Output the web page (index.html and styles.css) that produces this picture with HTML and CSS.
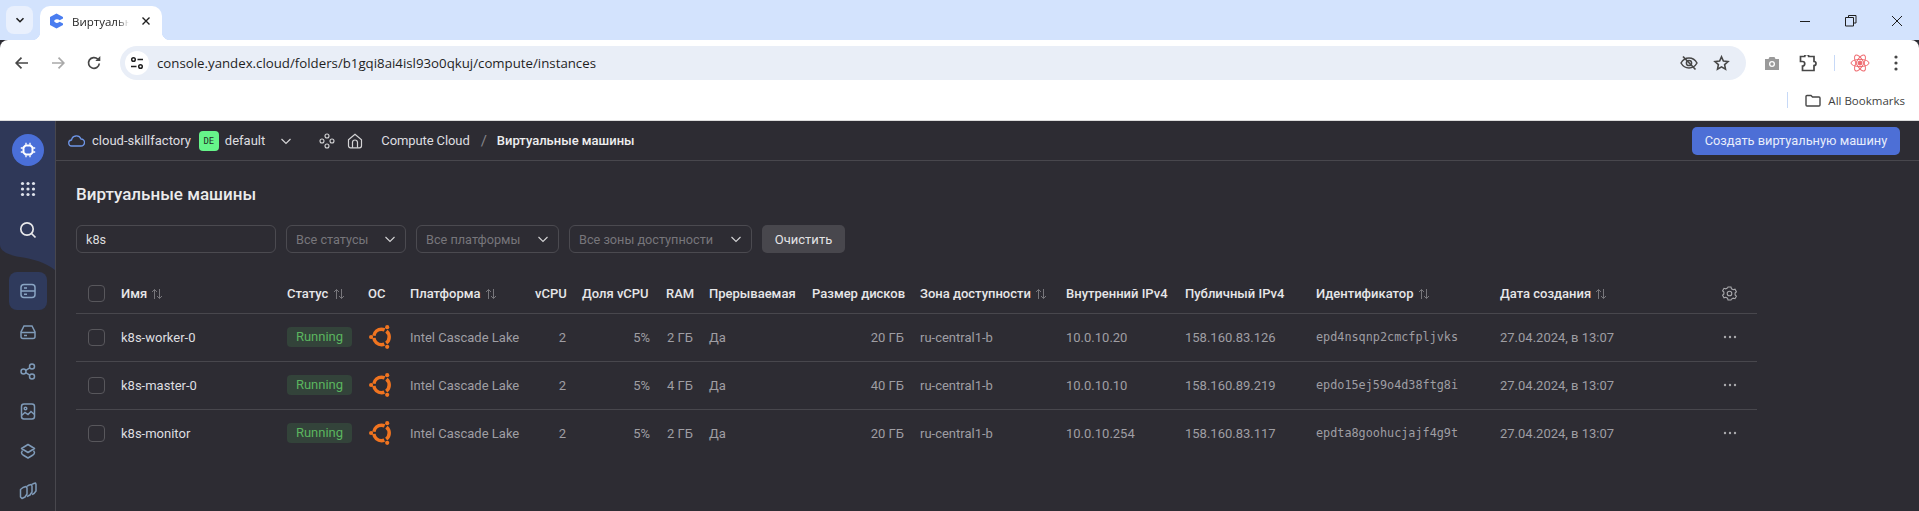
FILE: index.html
```html
<!DOCTYPE html>
<html>
<head>
<meta charset="utf-8">
<title>Виртуальные машины</title>
<link rel="stylesheet" href="styles.css">
</head>
<body>
<div class="tabstrip">
	<div class="tab-search"><svg width="12" height="12" viewBox="0 0 12 12"><path d="M2.5 4.2 6 7.7l3.5-3.5" fill="none" stroke="#1f1f1f" stroke-width="1.6"/></svg></div>
	<div class="tab">
		<svg class="favicon" width="15" height="16" viewBox="0 0 15 16"><path d="M7.5.5 14 4v1.5L10.6 7.3A3.4 3.4 0 0 0 5 8a3.4 3.4 0 0 0 5.6.8L14 10.5V12l-6.5 3.5L1 12V4z" fill="#4a7df0"/></svg>
		<span class="tab-title">Виртуальн</span>
		<svg class="tab-close" width="10" height="10" viewBox="0 0 10 10"><path d="M1.5 1.5l7 7m0-7l-7 7" stroke="#1f1f1f" stroke-width="1.4"/></svg>
	</div>
	<div class="win-btns">
		<svg width="46" height="14" viewBox="0 0 46 14"><path d="M18 7.5h10" stroke="#1f1f1f"/></svg>
		<svg width="46" height="14" viewBox="0 0 46 14"><path d="M20.5 3.5V1.5H28V9h-2.5M17.5 3.5h8V12h-8z" fill="none" stroke="#1f1f1f"/></svg>
		<svg width="46" height="14" viewBox="0 0 46 14"><path d="M18 2l10 10m0-10L18 12" stroke="#1f1f1f"/></svg>
	</div>
</div>
<div class="toolbar">
	<div class="tool-btn"><svg width="16" height="16" viewBox="0 0 16 16"><path d="M14 8H2.5M7.5 2.700 2.200 8l5.300 5.300" fill="none" stroke="#474747" stroke-width="1.7"/></svg></div>
	<div class="tool-btn"><svg width="16" height="16" viewBox="0 0 16 16"><path d="M2 8h11.500M8.500 2.700 13.800 8l-5.300 5.300" fill="none" stroke="#a9a9a9" stroke-width="1.7"/></svg></div>
	<div class="tool-btn"><svg width="16" height="16" viewBox="0 0 16 16"><path d="M13.300 8.500A5.400 5.400 0 1 1 11.800 4.200" fill="none" stroke="#474747" stroke-width="1.7"/><path d="M9.300 6h5V1z" fill="#474747"/></svg></div>
	<div class="omnibox">
		<div class="site-info"><svg width="14" height="14" viewBox="0 0 14 14" fill="none" stroke="#1f1f1f" stroke-width="1.5"><circle cx="3.500" cy="3.500" r="1.800"/><path d="M7.500 3.500H13M1 10.500h5.500"/><circle cx="10.500" cy="10.500" r="1.800"/></svg></div>
		<span class="url">console.yandex.cloud/folders/b1gqi8ai4isl93o0qkuj/compute/instances</span>
		<svg class="omni-eye" width="18" height="16" viewBox="0 0 18 16" fill="none" stroke="#474747" stroke-width="1.5"><path d="M1 8c2-3.500 5-5 8-5s6 1.500 8 5c-2 3.500-5 5-8 5S3 11.500 1 8z"/><circle cx="9" cy="8" r="2.600"/><path d="M3 1.500 15.500 14.500" stroke-width="1.7"/></svg>
		<svg class="omni-star" width="17" height="16" viewBox="0 0 17 16"><path d="M8.500 1.800 10.400 6l4.600.5-3.400 3.100.9 4.500-4-2.300-4 2.300.9-4.500L2 6.500 6.600 6z" fill="none" stroke="#474747" stroke-width="1.6"/></svg>
	</div>
	<div class="tool-btn"><svg width="16" height="15" viewBox="0 0 16 15"><path d="M1 3h3.500L5.500 1h5l1 2H15v11H1z" fill="#9a9a9a"/><circle cx="8" cy="8" r="3" fill="#fff"/><circle cx="8" cy="8" r="1.700" fill="#9a9a9a"/></svg></div>
	<div class="tool-btn"><svg width="18" height="17" viewBox="0 0 18 17"><path d="M1.500 1.500h4.200a2 2 0 0 1 4 0h5.300v5a2 2 0 0 1 0 4v5H3.500v-4.500a2.200 2.200 0 0 0 0-4.500h-2z" fill="none" stroke="#474747" stroke-width="1.7"/></svg></div>
	<div class="tool-sep"></div>
	<div class="tool-btn react"><svg width="20" height="20" viewBox="0 0 20 20" fill="none" stroke="#ef6a6f" stroke-width="1"><ellipse cx="10" cy="10" rx="9" ry="3.600"/><ellipse cx="10" cy="10" rx="9" ry="3.600" transform="rotate(60 10 10)"/><ellipse cx="10" cy="10" rx="9" ry="3.600" transform="rotate(120 10 10)"/><circle cx="10" cy="10" r="2" fill="#ef6a6f"/></svg></div>
	<div class="tool-btn"><svg width="4" height="16" viewBox="0 0 4 16" fill="#474747"><circle cx="2" cy="2" r="1.600"/><circle cx="2" cy="8" r="1.600"/><circle cx="2" cy="14" r="1.600"/></svg></div>
</div>
<div class="bookmarks">
	<div class="tool-sep"></div>
	<svg class="bm-folder" width="16" height="13" viewBox="0 0 16 13"><path d="M1 2.500a1 1 0 0 1 1-1h4l1.500 1.500H14a1 1 0 0 1 1 1v7a1 1 0 0 1-1 1H2a1 1 0 0 1-1-1z" fill="none" stroke="#474747" stroke-width="1.4"/></svg>
	<span>All Bookmarks</span>
</div>
<div class="app">
	<div class="aside">
		<svg class="aside-bg" width="55" height="149" viewBox="0 0 55 149"><path d="M0 0h55v149c-10-8-22-11-35-13C8 134 0 130 0 124z" fill="#2f3858"/></svg>
		<div class="aside-logo"><svg width="16" height="16" viewBox="0 0 16 16"><path d="M5.500 3.500h5l2 2v5l-2 2h-5l-2-2v-5z" fill="none" stroke="#fff" stroke-width="2"/><path d="M6 .8v2m4-2v2M6 13.200v2m4-2v2M.8 6h2m-2 4h2M13.200 6h2m-2 4h2" stroke="#fff" stroke-width="1.3"/></svg></div>
		<div class="aside-item"><svg width="16" height="16" viewBox="0 0 16 16" fill="#dfe3ec"><circle cx="2.500" cy="2.500" r="1.600"/><circle cx="8" cy="2.500" r="1.600"/><circle cx="13.500" cy="2.500" r="1.600"/><circle cx="2.500" cy="8" r="1.600"/><circle cx="8" cy="8" r="1.600"/><circle cx="13.500" cy="8" r="1.600"/><circle cx="2.500" cy="13.500" r="1.600"/><circle cx="8" cy="13.500" r="1.600"/><circle cx="13.500" cy="13.500" r="1.600"/></svg></div>
		<div class="aside-item"><svg width="18" height="18" viewBox="0 0 18 18" fill="none" stroke="#e8e8ea" stroke-width="1.7"><circle cx="8" cy="8" r="6.200"/><path d="M12.500 12.500l4 4"/></svg></div>
		<div class="aside-nav active"><svg width="16" height="16" viewBox="0 0 16 16" fill="none" stroke="#8aa5c4" stroke-width="1.5"><rect x="1" y="1.500" width="14" height="13" rx="3"/><path d="M1 8h14M4 5h3M4 11.300h3"/></svg></div>
		<div class="aside-nav"><svg width="16" height="16" viewBox="0 0 16 16" fill="none" stroke="#7f9bb9" stroke-width="1.5"><path d="M4 2h8l3 6v4.500a2 2 0 0 1-2 2H3a2 2 0 0 1-2-2V8z"/><path d="M1 8.500h14M4 11.500h3"/></svg></div>
		<div class="aside-nav"><svg width="16" height="17" viewBox="0 0 16 17" fill="none" stroke="#7f9bb9" stroke-width="1.5"><circle cx="3.500" cy="8.500" r="2.500"/><circle cx="12" cy="3.500" r="2.500"/><circle cx="12" cy="13.500" r="2.500"/><path d="M5.700 7.300 9.800 4.800M5.700 9.700l4.100 2.500"/></svg></div>
		<div class="aside-nav"><svg width="16" height="17" viewBox="0 0 16 17" fill="none" stroke="#7f9bb9" stroke-width="1.5"><rect x="1.500" y="1" width="13" height="15" rx="2.500"/><circle cx="5.500" cy="5.500" r="1.300"/><path d="M1.500 12.500 5 9.500l3 2 3-3 3.500 3"/></svg></div>
		<div class="aside-nav"><svg width="16" height="17" viewBox="0 0 16 17" fill="none" stroke="#7f9bb9" stroke-width="1.5" stroke-linejoin="round"><path d="M8 1.500 14.500 5.500 8 9.500 1.500 5.500z"/><path d="M2.500 7.500 1.500 9.500Q1.500 11 3 12L8 15 13 12Q14.500 11 14.500 9.500L13.500 7.500"/></svg></div>
		<div class="aside-nav"><svg width="18" height="18" viewBox="0 0 18 18" fill="none" stroke="#7f9bb9" stroke-width="1.5" stroke-linejoin="round"><path d="M1.500 7.500 4 5.500 7 4.500 8 6V12L6 15 3 16.500 1.500 15z"/><path d="M8 4.300 9.500 3.300 12.300 2.500 13 4V10L11 13 8 14.500"/><path d="M13 2.500 14 1.800 16.500 1 17 2.500V9L15 11.500 13 12.500"/></svg></div>
	</div>
	<div class="content">
		<div class="header">
			<svg class="hd-cloud" width="17" height="13" viewBox="0 0 17 13"><path d="M4 12a3 3 0 0 1-.5-6A5 5 0 0 1 13 5a3.500 3.500 0 0 1 0 7z" fill="none" stroke="#6e95e6" stroke-width="1.3"/></svg>
			<span class="hd-cloud-name">cloud-skillfactory</span>
			<span class="hd-badge">DE</span>
			<span class="hd-folder">default</span>
			<svg class="hd-chev" width="12" height="12" viewBox="0 0 12 12"><path d="M1.500 4 6 8.500 10.500 4" fill="none" stroke="#d4d4d6" stroke-width="1.2"/></svg>
			<svg class="hd-hub" width="16" height="16" viewBox="0 0 16 16" fill="none" stroke="#d4d4d6" stroke-width="1.1"><circle cx="8" cy="3" r="2"/><circle cx="3" cy="8" r="2"/><circle cx="13" cy="8" r="2"/><circle cx="8" cy="13" r="2"/></svg>
			<svg class="hd-home" width="16" height="16" viewBox="0 0 16 16" fill="none" stroke="#d4d4d6" stroke-width="1.2"><path d="M1.500 6.800 8 1.200l6.500 5.600v6a2 2 0 0 1-2 2h-9a2 2 0 0 1-2-2z"/><path d="M5.500 14.800V9.500a2.500 2.500 0 0 1 5 0v5.300"/></svg>
			<span class="hd-crumb">Compute Cloud</span>
			<span class="hd-slash">/</span>
			<span class="hd-current">Виртуальные машины</span>
			<button class="btn-create">Создать виртуальную машину</button>
		</div>
		<div class="page">
			<h1>Виртуальные машины</h1>
			<div class="filters">
				<div class="fld fld-search"><span class="fld-value">k8s</span></div>
				<div class="fld fld-status"><span>Все статусы</span><svg width="12" height="12" viewBox="0 0 12 12"><path d="M1.500 4 6 8.500 10.500 4" fill="none" stroke="#d4d4d6" stroke-width="1.1"/></svg></div>
				<div class="fld fld-platform"><span>Все платформы</span><svg width="12" height="12" viewBox="0 0 12 12"><path d="M1.500 4 6 8.500 10.500 4" fill="none" stroke="#d4d4d6" stroke-width="1.1"/></svg></div>
				<div class="fld fld-zone"><span>Все зоны доступности</span><svg width="12" height="12" viewBox="0 0 12 12"><path d="M1.500 4 6 8.500 10.500 4" fill="none" stroke="#d4d4d6" stroke-width="1.1"/></svg></div>
				<button class="btn-clear">Очистить</button>
			</div>
			<table class="vm-table">
				<colgroup>
					<col class="c-check"><col class="c-name"><col class="c-status"><col class="c-os"><col class="c-platform"><col class="c-vcpu"><col class="c-share"><col class="c-ram"><col class="c-preempt"><col class="c-disk"><col class="c-zone"><col class="c-int"><col class="c-pub"><col class="c-id"><col class="c-date"><col class="c-act">
				</colgroup>
				<thead>
					<tr>
						<th class="cell-check"><span class="checkbox"></span></th>
						<th>Имя <svg class="sort" width="12" height="12" viewBox="0 0 12 12"><use href="#sort"/></svg></th>
						<th>Статус <svg class="sort" width="12" height="12" viewBox="0 0 12 12"><use href="#sort"/></svg></th>
						<th>ОС</th>
						<th>Платформа <svg class="sort" width="12" height="12" viewBox="0 0 12 12"><use href="#sort"/></svg></th>
						<th class="num">vCPU</th>
						<th>Доля vCPU</th>
						<th class="num">RAM</th>
						<th>Прерываемая</th>
						<th class="num">Размер дисков</th>
						<th>Зона доступности <svg class="sort" width="12" height="12" viewBox="0 0 12 12"><use href="#sort"/></svg></th>
						<th>Внутренний IPv4</th>
						<th>Публичный IPv4</th>
						<th>Идентификатор <svg class="sort" width="12" height="12" viewBox="0 0 12 12"><use href="#sort"/></svg></th>
						<th>Дата создания <svg class="sort" width="12" height="12" viewBox="0 0 12 12"><use href="#sort"/></svg></th>
						<th class="cell-act"><svg width="15" height="15" viewBox="0 0 15 15" fill="none" stroke="#a9a9ad" stroke-width="1.1"><path d="M6 1h3l.5 1.800 1.700.9 1.800-.5 1.400 2.500-1.300 1.300v1.900l1.300 1.300-1.400 2.500-1.800-.5-1.700.9L9 14H6l-.5-1.800-1.700-.9-1.800.5L.6 9.300l1.300-1.300V6.100L.6 4.800 2 2.300l1.800.5 1.700-.9z"/><circle cx="7.500" cy="7.500" r="2.300"/></svg></th>
					</tr>
				</thead>
				<tbody>
					<tr>
						<td class="cell-check"><span class="checkbox"></span></td>
						<td class="name">k8s-worker-0</td>
						<td><span class="status">Running</span></td>
						<td><svg class="os-logo" width="24" height="24" viewBox="0 0 24 24"><use href="#ubuntu"/></svg></td>
						<td>Intel Cascade Lake</td>
						<td class="num">2</td>
						<td class="num">5%</td>
						<td class="num">2 ГБ</td>
						<td>Да</td>
						<td class="num">20 ГБ</td>
						<td>ru-central1-b</td>
						<td>10.0.10.20</td>
						<td>158.160.83.126</td>
						<td class="mono">epd4nsqnp2cmcfpljvks</td>
						<td>27.04.2024, в 13:07</td>
						<td class="cell-act"><svg width="14" height="4" viewBox="0 0 14 4"><use href="#more"/></svg></td>
					</tr>
					<tr>
						<td class="cell-check"><span class="checkbox"></span></td>
						<td class="name">k8s-master-0</td>
						<td><span class="status">Running</span></td>
						<td><svg class="os-logo" width="24" height="24" viewBox="0 0 24 24"><use href="#ubuntu"/></svg></td>
						<td>Intel Cascade Lake</td>
						<td class="num">2</td>
						<td class="num">5%</td>
						<td class="num">4 ГБ</td>
						<td>Да</td>
						<td class="num">40 ГБ</td>
						<td>ru-central1-b</td>
						<td>10.0.10.10</td>
						<td>158.160.89.219</td>
						<td class="mono">epdo15ej59o4d38ftg8i</td>
						<td>27.04.2024, в 13:07</td>
						<td class="cell-act"><svg width="14" height="4" viewBox="0 0 14 4"><use href="#more"/></svg></td>
					</tr>
					<tr>
						<td class="cell-check"><span class="checkbox"></span></td>
						<td class="name">k8s-monitor</td>
						<td><span class="status">Running</span></td>
						<td><svg class="os-logo" width="24" height="24" viewBox="0 0 24 24"><use href="#ubuntu"/></svg></td>
						<td>Intel Cascade Lake</td>
						<td class="num">2</td>
						<td class="num">5%</td>
						<td class="num">2 ГБ</td>
						<td>Да</td>
						<td class="num">20 ГБ</td>
						<td>ru-central1-b</td>
						<td>10.0.10.254</td>
						<td>158.160.83.117</td>
						<td class="mono">epdta8goohucjajf4g9t</td>
						<td>27.04.2024, в 13:07</td>
						<td class="cell-act"><svg width="14" height="4" viewBox="0 0 14 4"><use href="#more"/></svg></td>
					</tr>
				</tbody>
			</table>
		</div>
	</div>
</div>
<svg class="defs" width="0" height="0">
	<symbol id="sort" viewBox="0 0 12 12"><path d="M3.500 11V1.500M1 4l2.500-2.500L6 4M8.500 1v9.500M6 8l2.500 2.500L11 8" fill="none" stroke="#77767b" stroke-width="1"/></symbol>
	<symbol id="more" viewBox="0 0 14 4"><circle cx="2" cy="2" r="1.200" fill="#a9a9ad"/><circle cx="7" cy="2" r="1.200" fill="#a9a9ad"/><circle cx="12" cy="2" r="1.200" fill="#a9a9ad"/></symbol>
	<symbol id="ubuntu" viewBox="0 0 24 24">
		<circle cx="12.500" cy="12" r="7.700" fill="none" stroke="#f07420" stroke-width="3.500" stroke-dasharray="13.98 2.15" stroke-dashoffset="-9.14"/>
		<circle cx="18.200" cy="2.200" r="2.100" fill="#f07420"/>
		<circle cx="2.100" cy="12" r="2.100" fill="#f07420"/>
		<circle cx="18.200" cy="21.800" r="2.100" fill="#f07420"/>
	</symbol>
</svg>
</body>
</html>
```
FILE: styles.css
```css
*{box-sizing:border-box;}
html,body{margin:0;padding:0;height:511px;overflow:hidden;}
body{font-family:Roboto,'Noto Sans',sans-serif;font-size:13px;background:#2d2c33;color:#e3e3e5;}
svg{display:block;flex:none;}
.defs{position:absolute;}

/*browser*/
.tabstrip{height:40px;background:#d3e3fd;display:flex;padding:6px 0 0 6px;}
.tab-search{width:27px;height:28px;border-radius:8px;background:#e9f0fd;display:flex;align-items:center;justify-content:center;}
.tab{position:relative;width:122px;height:34px;margin-left:7px;background:#fff;border-radius:10px 10px 0 0;display:flex;align-items:center;padding:0 0 4px 9px;font:12px 'Open Sans',sans-serif;color:#1f1f1f;}
.tab::before,.tab::after{content:"";position:absolute;bottom:0;width:8px;height:8px;}
.tab::before{left:-8px;background:radial-gradient(circle at 0 0,transparent 8px,#fff 8.5px);}
.tab::after{right:-8px;background:radial-gradient(circle at 100% 0,transparent 8px,#fff 8.5px);}
.tab-title{width:57px;margin-left:8px;white-space:nowrap;font-size:11.5px;-webkit-mask-image:linear-gradient(90deg,#000 80%,transparent);mask-image:linear-gradient(90deg,#000 80%,transparent);}
.tab-close{margin-left:12px;}
.win-btns{margin-left:auto;margin-right:-1px;display:flex;padding-top:8px;height:28px;}
.toolbar{position:relative;height:46px;background:#fff;border-radius:8px 8px 0 0;display:flex;align-items:flex-start;padding:6px 0 0 4px;}
.tool-btn{width:36px;height:34px;display:flex;align-items:center;justify-content:center;}
.omnibox{width:1626px;height:34px;margin:0 8px;border-radius:17px;background:#e9eef7;display:flex;align-items:center;padding-left:5px;}
.site-info{width:24px;height:24px;border-radius:50%;background:#fff;display:flex;align-items:center;justify-content:center;}
.url{margin-left:8px;font:13.25px 'Open Sans',sans-serif;color:#1f1f1f;white-space:nowrap;}
.omni-eye{margin-left:auto;}
.omni-star{margin:0 16px 0 15px;}
.tool-sep{width:1px;height:16px;background:#c7d9f7;}
.toolbar .tool-sep{margin:9px 8px 0;}
.react{margin-left:-1px;}
.bookmarks{height:35px;background:#fff;border-bottom:1px solid #dcdcdc;display:flex;align-items:center;justify-content:flex-end;padding:0 14px 6px 0;font:11.5px 'Open Sans',sans-serif;color:#3f3f3f;}
.bm-folder{margin:0 7px 0 17px;}

/*app*/
.app{display:flex;height:390px;}
.aside{position:relative;width:56px;border-right:1px solid #48474d;display:flex;flex-direction:column;align-items:center;}
.aside-bg{position:absolute;left:0;top:0;}
.aside-logo{position:relative;width:32px;height:32px;margin-top:13px;border-radius:50%;background:#4a6fd8;display:flex;align-items:center;justify-content:center;}
.aside-item{position:relative;height:41px;width:38px;display:flex;align-items:center;justify-content:center;}
.aside-logo + .aside-item{margin-top:3px;}
.aside-nav{position:relative;width:38px;height:40px;display:flex;align-items:center;justify-content:center;}
.aside-item + .aside-nav{margin-top:21px;height:38px;margin-bottom:2px;}
.aside-nav.active{background:#2f3a5c;border-radius:8px;}
.content{flex:1;min-width:0;}
.header{height:40px;border-bottom:1px solid #48474d;display:flex;align-items:center;padding:0 19px 0 12px;color:#dedee0;}
.hd-cloud-name{margin-left:7px;}
.hd-badge{width:20px;height:20px;margin-left:8px;border-radius:4px;background:#66f58a;color:#24302a;font:9px 'DejaVu Sans Mono',monospace;display:flex;align-items:center;justify-content:center;}
.hd-folder{margin-left:6px;}
.hd-chev{margin-left:15px;}
.hd-hub{margin-left:27px;}
.hd-home{margin-left:12px;}
.hd-crumb{margin-left:18px;letter-spacing:-.1px;}
.hd-slash{margin-left:11px;color:#86858a;font-size:15px;}
.hd-current{margin-left:10px;font-weight:500;color:#eeeeef;}
.btn-create{margin-left:auto;width:208px;height:28px;border:0;border-radius:5px;background:#4d6fd6;color:#e8edfb;font:12.8px Roboto,sans-serif;}
.page{padding:23px 0 0 20px;}
h1{margin:0;font-size:17px;line-height:20px;font-weight:500;color:#ebebec;}
.filters{display:flex;margin-top:21px;gap:10px;}
.fld{height:28px;border:1px solid #4b4a50;border-radius:6px;display:flex;align-items:center;justify-content:space-between;padding:0 9px;font-size:12.7px;color:#77767b;}
.fld-value{color:#dcdcde;}
.fld-search{width:200px;}
.fld-status{width:120px;}
.fld-platform{width:143px;}
.fld-zone{width:183px;}
.btn-clear{width:83px;height:28px;border:0;border-radius:5px;background:#48474d;color:#e3e3e5;font:13px Roboto,sans-serif;}

/*table*/
.vm-table{width:1681px;margin-top:21px;table-layout:fixed;border-collapse:collapse;}
.vm-table th,.vm-table td{padding:0 8px;text-align:left;white-space:nowrap;overflow:hidden;}
.vm-table th{height:39px;font-weight:500;color:#e6e6e8;border-bottom:1px solid #48474d;}
.vm-table td{height:48px;color:#9f9ea3;border-bottom:1px solid #48474d;}
.vm-table tbody tr:last-child td{border-bottom:0;}
.vm-table .num{text-align:right;}
.vm-table .name{color:#dedee0;}
.vm-table .mono{font:11.8px 'DejaVu Sans Mono',monospace;}
.vm-table .cell-check{padding:0 0 0 12px;}
.vm-table .cell-act{padding:0 20px 0 0;}
.cell-act svg{margin-left:auto;}
.checkbox{display:block;width:17px;height:17px;border:1px solid #58575c;border-radius:4px;}
.sort{display:inline-block;vertical-align:-2px;margin-left:1px;}
.status{display:inline-block;width:65px;height:20px;line-height:20px;border-radius:4px;background:#33433a;color:#5bb55f;text-align:center;}
.os-logo{margin-left:1px;}

.c-check{width:37px;}
.c-name{width:166px;}
.c-status{width:81px;}
.c-os{width:42px;}
.c-platform{width:125px;}
.c-vcpu{width:47px;}
.c-share{width:84px;}
.c-ram{width:43px;}
.c-preempt{width:103px;}
.c-disk{width:108px;}
.c-zone{width:146px;}
.c-int{width:119px;}
.c-pub{width:131px;}
.c-id{width:184px;}
.c-date{width:221px;}
.c-act{width:44px;}
```
